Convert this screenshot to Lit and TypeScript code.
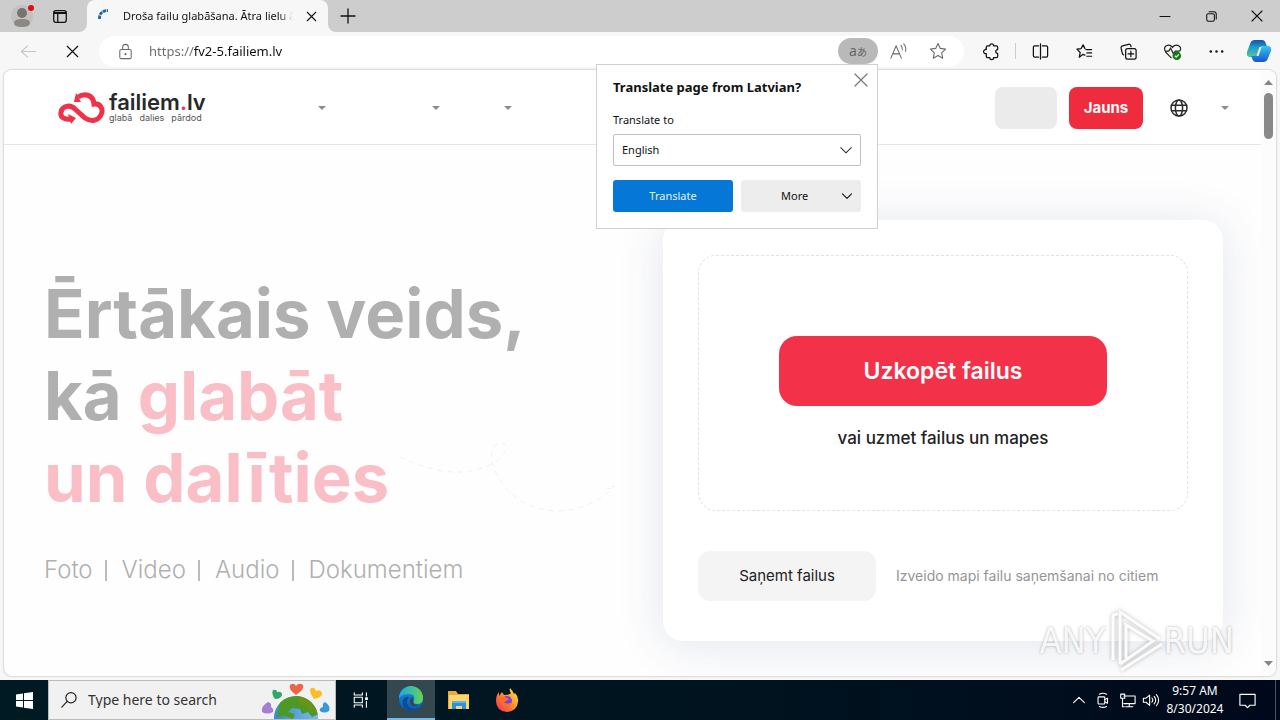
import { LitElement, html, svg, css } from "lit";
import { customElement } from "lit/decorators.js";

const line = (size: number, body: unknown, width = 1.1) => html`<svg width=${size} height=${size} viewBox="0 0 20 20"
  fill="none" stroke="currentColor" stroke-width=${width} stroke-linecap="round" stroke-linejoin="round" aria-hidden="true">${body}</svg>`;

const icons = {
  tabs: svg`<rect x="3" y="4" width="14" height="13" rx="2.5"/><path d="M3.5 7h13M7.5 7v9.500M3.500 6.200h13" />`,
  close: svg`<path d="M5 5l10 10M15 5L5 15"/>`,
  plus: svg`<path d="M10 3v14M3 10h14"/>`,
  minimize: svg`<path d="M5 10.500h10"/>`,
  restore: svg`<rect x="5" y="7" width="8" height="8" rx="1.500"/><path d="M7.500 5h5a2.500 2.500 0 0 1 2.500 2.500v5"/>`,
  back: svg`<path d="M17.500 10H2.500M9 4l-6.500 6L9 16"/>`,
  lock: svg`<rect x="4" y="8" width="12" height="9.500" rx="1.500"/><path d="M7 8V5.500a3 3 0 0 1 6 0V8"/><circle cx="10" cy="12.800" r=".6" fill="currentColor"/>`,
  read: svg`<path d="M2 17L7.500 4L13 17M4 12.500h7M12.500 3.500q2 2 1.500 5M15.500 2q3 3.500 2 8"/>`,
  star: svg`<path d="M10 2.500l2.300 4.900 5.300.7-3.900 3.700 1 5.400-4.700-2.600-4.700 2.600 1-5.400L2.400 8.100l5.300-.7z"/>`,
  puzzle: svg`<path d="M6 4h2.200a2 2 0 0 1 4 0H15a1.500 1.500 0 0 1 1.500 1.500V8a2 2 0 0 0 0 4v3a1.500 1.500 0 0 1-1.500 1.500h-2.800a2 2 0 0 1-4 0H6A1.500 1.500 0 0 1 4.500 15v-2.800a2.200 2.200 0 1 1 0-4.200V5.500A1.500 1.500 0 0 1 6 4z"/>`,
  split: svg`<path d="M8 4H4a1.500 1.500 0 0 0-1.500 1.500v9A1.500 1.500 0 0 0 4 16h4M12 4h4a1.500 1.500 0 0 1 1.500 1.500v9A1.500 1.500 0 0 1 16 16h-4M10 2v16"/>`,
  favorites: svg`<path d="M11.500 8H17.500M12.500 11.500h5M12.500 15h5M10.500 13.800L8.500 13l-4 3 1-5L2 7.500l4.500-.6L8.500 3l2 4"/>`,
  collections: svg`<rect x="7" y="7" width="11" height="11" rx="2"/><path d="M12.500 9.500v6M9.500 12.500h6M5 13.500a2 2 0 0 1-1.500-1.500L2.200 6.500A2 2 0 0 1 3.600 4l6.500-1.600A2 2 0 0 1 12.500 4l.2 1"/>`,
  more: svg`<g fill="currentColor" stroke="none"><circle cx="4" cy="10" r="1.300"/><circle cx="10" cy="10" r="1.300"/><circle cx="16" cy="10" r="1.300"/></g>`,
  chevron: svg`<path d="M3.500 7l6.500 6.500L16.500 7"/>`,
  up: svg`<path d="M4 13l6-6 6 6"/>`,
  globe: svg`<circle cx="10" cy="10" r="8"/><ellipse cx="10" cy="10" rx="3.600" ry="8"/><path d="M2.500 7.300h15M2.500 12.700h15"/>`,
  search: svg`<circle cx="12.200" cy="7.500" r="5.700"/><path d="M8 11.500L2 18"/>`,
  taskview: svg`<path d="M2.500 2v2.500h9V2M2.500 18v-2.500h9V18M2.500 7h9v6h-9zM16 2v3.500M16 11.500V18"/><rect x="15.200" y="7.500" width="1.800" height="2" fill="currentColor"/>`,
  camera: svg`<rect x="4.500" y="6.500" width="7.500" height="8" rx="1"/><path d="M12 9.500l3-1.500v5.500l-3-1.500M6 3.500q4-2 8 0M6 17.200q4 2 8 0"/>`,
  network: svg`<path d="M6.500 5.500H19v8.500H6.500M12.500 14v3.500M8.500 17.500h8M3 3.500h4.500V8H3zM5 8v9.500h2"/>`,
  volume: svg`<path d="M1.500 8v4.500h3l4 3.500V4.500L4.500 8zM11 7.800q2 2.300 0 4.600M13.500 6q3.500 4.200 0 8.400M16 4q5 6.200 0 12.400"/>`,
  note: svg`<path d="M2 3.500h16v11.500h-5.500L10 17.500 7.500 15H2z"/>`,
};

@customElement("app-root")
export class AppRoot extends LitElement {
  static styles = css`
    :host { display: flex; flex-direction: column; height: 100vh; overflow: hidden; background: #f7f7f7; color: #111;
      font: 12px/16px "Noto Sans", "Open Sans", sans-serif; }
    * { box-sizing: border-box; }
    button, input, select { font: inherit; color: inherit; border: 0; padding: 0; margin: 0; background: none; outline: 0; }
    button { display: flex; align-items: center; justify-content: center; }
    svg { display: block; flex: none; }

    .tabstrip { display: flex; height: 32px; flex: none; background: linear-gradient(#cdcdcd 50%, #f7f7f7 50%); }
    .left { display: flex; align-items: center; width: 87px; padding-left: 8px; gap: 10px; background: #cdcdcd; border-bottom-right-radius: 8px; }
    .left button { width: 28px; height: 32px; }
    .tab { display: flex; align-items: center; width: 241px; padding: 0 8px 0 10px; gap: 10px; background: #f7f7f7; border-radius: 8px 8px 0 0; }
    .title { flex: 1; min-width: 0; overflow: hidden; white-space: nowrap; font-size: 11px;
      -webkit-mask-image: linear-gradient(90deg, #000 92%, transparent); mask-image: linear-gradient(90deg, #000 92%, transparent); }
    .rest { flex: 1; display: flex; align-items: center; background: #cdcdcd; border-bottom-left-radius: 8px; padding-left: 10px; }
    .window { display: flex; margin-left: auto; }
    .window button { width: 46px; height: 32px; }

    .toolbar { display: flex; align-items: center; height: 38px; flex: none; padding-left: 14px; }
    .nav { display: flex; gap: 16px; width: 85px; }
    .nav button { width: 28px; height: 28px; }
    .faded { color: #c4c4c4; }
    .address { position: relative; z-index: 5; flex: 1; display: flex; align-items: center; height: 31px; padding: 0 6px 0 17px; gap: 14px; background: #fff; border-radius: 16px; color: #6b6b6b; }
    .url { flex: 1; min-width: 0; height: 24px; font-size: 13px; color: transparent;
      background: linear-gradient(90deg, #6b6b6b 45px, #111 45px); -webkit-background-clip: text; background-clip: text; }
    .actions { display: flex; align-items: center; }
    .actions button { width: 40px; height: 26px; }
    .actions .lang { border-radius: 13px; background: #b9b9b9; font-size: 14px; color: #666; }
    .small { font: 10px "Noto Sans CJK JP", sans-serif; }
    .tools { display: flex; align-items: center; padding-left: 13px; }
    .tools button { width: 44px; height: 32px; }
    .tools button:first-child { width: 28px; }
    .sep { width: 1px; height: 16px; margin-left: 10px; margin-right: 2px; background: #ccc; }
    .tools .copilot { width: 42px; }

    .popup { position: absolute; top: 28px; right: 86px; width: 282px; padding: 13px 16px 16px; background: #fff; border: 1px solid #d0d0d0; color: #111; }
    .popup h2 { margin: 0; font-size: 13px; line-height: 18px; font-weight: 700; }
    .dismiss { position: absolute; top: 6px; right: 7px; width: 18px; height: 18px; color: #777; }
    .popup label { display: block; margin: 16px 0 6px; font-size: 11px; line-height: 16px; }
    .pick { position: relative; display: flex; color: #333; }
    .pick select { flex: 1; height: 32px; padding-left: 8px; border: 1px solid #c2c2c2; border-radius: 2px; appearance: none; color: #111; font-size: 11px; }
    .pick svg { position: absolute; right: 7px; top: 8px; pointer-events: none; }
    .choices { display: grid; grid-template-columns: 1fr 1fr; gap: 8px; margin-top: 14px; }
    .choices button { height: 32px; border-radius: 3px; background: #ededed; font-size: 11px; }
    .choices .go { background: #0578d7; color: #e4f1fc; }
    .choices .menu { padding: 0 7px 0 40px; justify-content: space-between; }

    .frame { flex: 1; min-height: 0; display: flex; margin: 0 4px 4px; background: #fefefe; border-radius: 8px; box-shadow: 0 0 2px #999; overflow: hidden; font-family: "Inter", sans-serif; }
    .page { flex: 1; min-width: 0; display: flex; flex-direction: column; overflow: hidden; }
    .scroll { width: 15px; display: flex; flex-direction: column; align-items: center; justify-content: space-between; padding: 10px 0; background: #fcfcfc; color: #858585; }
    .thumb { width: 9px; height: 46px; border-radius: 5px; background: #898989; margin: 8px 0 auto; }

    .site { display: flex; align-items: center; height: 75px; flex: none; padding: 2px 24px 0 54px; border-bottom: 1px solid #e5e5e5; background: #fff; }
    .logo { display: flex; align-items: center; gap: 4px; width: 190px; color: #292929; text-decoration: none; }
    .brand { font-size: 22px; line-height: 20px; font-weight: 600; }
    .brand i { font-style: normal; color: #f0314a; }
    .words { display: flex; flex-direction: column; }
    .tag { display: flex; gap: 7px; font-size: 9px; line-height: 12px; color: #555; }
    .menus { display: flex; flex: 1; }
    .menus button { justify-content: flex-end; height: 40px; width: 72px; color: #8d8d8d; }
    .menus button:first-child { width: 78px; }
    .menus button:nth-child(2) { width: 114px; }
    .account { display: flex; align-items: center; gap: 12px; }
    .ghost { width: 62px; height: 42px; border-radius: 8px; background: #ebebeb; }
    .account .new { width: 74px; height: 42px; border-radius: 8px; background: #ef2c3e; color: #fff; font-size: 15px; font-weight: 700; }
    .account .locale { gap: 32px; width: 82px; padding-left: 6px; color: #2b2b2b; }
    .locale .caret { color: #8d8d8d; }

    .hero { flex: 1; display: flex; justify-content: space-between; padding: 75px 38px 0 40px; }
    .pitch { position: relative; flex: 1; padding-top: 53px; }
    h1 { margin: 0; font-size: 67px; line-height: 82px; font-weight: 700; color: #b0b0b0; white-space: nowrap; }
    h1 em { font-style: normal; color: #fabec6; }
    .kinds { display: flex; gap: 12px; margin: 36px 0 0; padding: 0; list-style: none; font-size: 24px; line-height: 30px; font-weight: 300; color: #b0b0b0; }
    .kinds li { display: flex; align-items: center; gap: 15px; }
    .kinds li + li::before { content: ""; width: 2px; height: 21px; background: #bcbcbc; }
    .trail { position: absolute; left: 354px; top: 220px; }
    .card { width: 560px; align-self: flex-start; padding: 35px 35px 40px; background: #fff; border-radius: 20px; box-shadow: 0 4px 46px 2px rgba(50, 65, 125, .12); }
    .drop { display: flex; flex-direction: column; align-items: center; gap: 20px; padding: 80px 20px 60px; border: 1px dashed #e3e3e3; border-radius: 18px; font-size: 17px; line-height: 24px; font-weight: 500; color: #222; }
    .upload { width: 328px; height: 70px; border-radius: 18px; background: #f33249; color: #fff; font-size: 23px; font-weight: 600; }
    .receive { display: flex; align-items: center; gap: 20px; margin-top: 40px; color: #959595; font-size: 14px; white-space: nowrap; }
    .receive button { width: 178px; height: 50px; border-radius: 12px; background: #f4f4f4; color: #222; font-size: 15px; }

    .mark { position: absolute; z-index: 4; right: 46px; bottom: 46px; display: flex; align-items: center; color: rgba(255, 255, 255, .9); pointer-events: none;
      font: 36px/64px "DejaVu Sans Condensed", "Open Sans", sans-serif; text-shadow: 0 0 3px rgba(0, 0, 0, .3); }
    .mark svg { filter: drop-shadow(0 0 2px rgba(0, 0, 0, .3)); }

    .taskbar { display: flex; flex: none; height: 40px; background: linear-gradient(90deg, #001a23, #00131f 60%, #00091b); color: #fff; }
    .taskbar button { width: 48px; height: 40px; }
    .find { display: flex; align-items: center; width: 288px; padding: 0 5px 0 11px; gap: 10px; background: #f1f1f1; border: 1px solid #bbb; color: #222; }
    .find input { flex: 1; min-width: 0; font-size: 14px; }
    .find input::placeholder { color: #333; opacity: 1; }
    .taskbar .task { width: 51px; padding-right: 2px; }
    .taskbar .active { background: #33484f; border-bottom: 2px solid #76b9ed; }
    .tray { display: flex; align-items: center; margin-left: auto; }
    .tray button { width: 24px; }
    .clock { width: 64px; text-align: center; line-height: 18px; white-space: nowrap; }
    .tray .notes { width: 40px; }
    .edge { width: 5px; height: 40px; border-left: 1px solid #465465; margin-left: 8px; }
  `;

  private caret() {
    return html`<svg class="caret" width="8" height="4" viewBox="0 0 8 4" fill="currentColor"><path d="M0 0h8L4 4z"/></svg>`;
  }

  private tabStrip() {
    return html`<header class="tabstrip">
      <div class="left">
        <button aria-label="Profile"><svg width="28" height="28" viewBox="0 0 28 28"><circle cx="14" cy="14" r="11" fill="#c3c1bf"/><circle cx="14" cy="11" r="5" fill="#77736f"/><path d="M6 21q0-4 8-4t8 4-8 4-8-4" fill="#8b8783"/><circle cx="23" cy="6" r="3" fill="#e30b16"/></svg></button>
        <button aria-label="Tab actions">${line(18, icons.tabs, 1.4)}</button>
      </div>
      <div class="tab">
        <svg width="16" height="16" viewBox="0 0 16 16" fill="none" stroke="#1c68ad" stroke-width="2.800"><path d="M2.500 11Q2 3 11 2.500" stroke-dasharray="3.500 .7"/></svg>
        <span class="title">Droša failu glabāšana. Ātra lielu ā</span>
        <button aria-label="Close tab">${line(17, icons.close, 1.3)}</button>
      </div>
      <div class="rest">
        <button aria-label="New tab">${line(20, icons.plus, 1.3)}</button>
        <div class="window">
          <button aria-label="Minimize">${line(20, icons.minimize)}</button>
          <button aria-label="Restore">${line(19, icons.restore)}</button>
          <button aria-label="Close">${line(20, icons.close)}</button>
        </div>
      </div>
    </header>`;
  }

  private popup() {
    return html`<section class="popup">
      <h2>Translate page from Latvian?</h2>
      <button class="dismiss" aria-label="Dismiss">${line(24, icons.close, 1)}</button>
      <label for="language">Translate to</label>
      <div class="pick"><select id="language"><option>English</option></select>${line(16, icons.chevron, 1.3)}</div>
      <div class="choices"><button class="go">Translate</button><button class="menu">More ${line(14, icons.chevron, 1.5)}</button></div>
    </section>`;
  }

  private toolbar() {
    return html`<div class="toolbar">
      <div class="nav">
        <button class="faded" aria-label="Back">${line(19, icons.back)}</button>
        <button aria-label="Stop">${line(21, icons.close)}</button>
      </div>
      <div class="address">
        ${line(19, icons.lock)}
        <input class="url" aria-label="Address" value="https://fv2-5.failiem.lv">
        <div class="actions">
          <button class="lang" aria-label="Translate">a<span class="small">あ</span></button>
          <button aria-label="Read aloud">${line(19, icons.read)}</button>
          <button aria-label="Favorite">${line(20, icons.star)}</button>
        </div>
        ${this.popup()}
      </div>
      <div class="tools">
        <button aria-label="Extensions">${line(19, icons.puzzle, 1.3)}</button><span class="sep"></span>
        <button aria-label="Split screen">${line(19, icons.split, 1.3)}</button>
        <button aria-label="Favorites">${line(19, icons.favorites, 1.3)}</button>
        <button aria-label="Collections">${line(19, icons.collections, 1.3)}</button>
        <button aria-label="Browser essentials"><svg width="19" height="19" viewBox="0 0 20 20" fill="none" stroke="#222" stroke-width="1.300"><path d="M9 17L3 11Q0 6 3.500 4 7 2 10 5.500 13 2 16.500 4 20 6 17.500 10M2 9.500h4l2-3 3 6 2-3h4"/><circle cx="14.500" cy="14.500" r="4.500" fill="#107c10" stroke="none"/><path d="M12.500 14.500l1.400 1.500 2.700-3" stroke="#fff"/></svg></button>
        <button aria-label="More tools">${line(19, icons.more)}</button>
        <button class="copilot" aria-label="Copilot"><svg width="26" height="26" viewBox="0 0 26 26">
          <defs><linearGradient id="ca" x2="0" y2="1"><stop stop-color="#1453a4"/><stop offset=".45" stop-color="#1d9fd0"/><stop offset="1" stop-color="#55c992"/></linearGradient>
          <linearGradient id="cb" x2="0" y2="1"><stop stop-color="#38c6f1"/><stop offset="1" stop-color="#1555d4"/></linearGradient></defs>
          <path d="M9 2h7q3 0 4 4l1 2h-3q-4 0-5 4l-1 4q-1 3-4 3H4q-4 0-3-5L4 6q1-4 5-4z" fill="url(#ca)"/>
          <path d="M18 8h4q4 0 3 5l-3 7q-1 4-5 4h-7q-3 0-4-4l-1-2h3q4 0 5-4l1-3q1-3 4-3z" fill="url(#cb)"/><path d="M13.500 9h2l-3 9h-2z" fill="#f7f7f7"/></svg></button>
      </div>
    </div>`;
  }

  private site() {
    return html`<header class="site">
      <a class="logo" href="#">
        <svg width="47" height="32" viewBox="0 0 47 32" fill="none" stroke="#f0314a" stroke-width="5"><path d="M20 5C26 1 35 2 36 12C42 11 46 17 43 23C40 29 33 30 27 26L17 17C12 12 4 14 3 20C2 25 6 28 13 27"/><path d="M18 1l5 9-7 0zM10 22l8 4-5 6z" fill="#f0314a" stroke="none"/></svg>
        <span class="words"><span class="brand">failiem<i>.</i>lv</span><span class="tag"><span>glabā</span> <span>dalies</span> <span>pārdod</span></span></span>
      </a>
      <nav class="menus">
        <button aria-label="Menu">${this.caret()}</button><button aria-label="Menu">${this.caret()}</button><button aria-label="Menu">${this.caret()}</button>
      </nav>
      <div class="account">
        <button class="ghost" aria-label="Sign in"></button>
        <button class="new">Jauns</button>
        <button class="locale" aria-label="Language">${line(20, icons.globe, 1.5)}${this.caret()}</button>
      </div>
    </header>`;
  }

  private hero() {
    return html`<main class="hero">
      <section class="pitch">
        <h1>Ērtākais veids,<br>kā <em>glabāt<br>un dalīties</em></h1>
        <ul class="kinds"><li>Foto</li><li>Video</li><li>Audio</li><li>Dokumentiem</li></ul>
        <svg class="trail" width="220" height="74" viewBox="0 0 220 74" fill="none" stroke="#f0f0f0" stroke-dasharray="5 5"><path d="M2 17Q60 45 99 21C113 10 110 2 102 3C90 5 92 24 100 37C126 82 185 78 214 49l-6-1 8-2 1 6"/></svg>
      </section>
      <section class="card">
        <div class="drop"><button class="upload">Uzkopēt failus</button><span>vai uzmet failus un mapes</span></div>
        <div class="receive"><button>Saņemt failus</button><span>Izveido mapi failu saņemšanai no citiem</span></div>
      </section>
    </main>`;
  }

  private taskbar() {
    return html`<footer class="taskbar">
      <button aria-label="Start"><svg width="17" height="17" viewBox="0 0 17 17" fill="#fff"><path d="M0 2.500l7-1V8H0zM8 1.300L17 0v8H8zM0 9h7v6.500l-7-1zM8 9h9v8l-9-1.300z"/></svg></button>
      <label class="find">${line(18, icons.search, 1.3)}
        <input aria-label="Search" placeholder="Type here to search">
        <svg width="74" height="38" viewBox="0 0 74 38">
          <defs><clipPath id="world"><circle cx="40" cy="37" r="22"/></clipPath><linearGradient id="sea" x2="1"><stop stop-color="#338fc9"/><stop offset="1" stop-color="#77baf0"/></linearGradient></defs>
          <circle cx="40" cy="37" r="22" fill="url(#sea)"/>
          <g clip-path="url(#world)"><path d="M24 20q10-6 22-5 12 4 17 18l-7 3-4-5-6 2-2-5-8-1-4 4 7 2-2 5-8-3-8 1z" fill="#4c9a25"/><path d="M42 15q14 3 18 16l-7-1-3-5-7-2z" fill="#6a9415"/></g>
          <path d="M34 4q4-3 6 1 3-4 7-1 2 4-7 10-8-6-6-10" fill="#ee6449"/>
          <path d="M17 9q4-1 4 2 5-1 5 3-1 4-7 4-4-5-2-9" fill="#2fa866"/>
          <path d="M55 7q4-1 5 3 5-2 6 2 1 4-8 6-6-8-3-11" fill="#f9bd27"/>
          <path d="M12 21q4 1 3 5 3 2 2 5-6 3-11 0-1-6 6-10" fill="#a77dd6"/>
          <path d="M69 21q-3 1-2 5-4 1-3 4 4 3 9 0 2-5-4-9" fill="#3498db"/>
        </svg>
      </label>
      <button class="task" aria-label="Task view">${line(18, icons.taskview, 1.2)}</button>
      <button class="active" aria-label="Edge"><svg width="26" height="26" viewBox="0 0 26 26">
        <defs><linearGradient id="ea" x2="1"><stop stop-color="#1aa8e8"/><stop offset="1" stop-color="#65d454"/></linearGradient><linearGradient id="eb" x2="0" y2="1"><stop stop-color="#1793df"/><stop offset="1" stop-color="#0c57b0"/></linearGradient></defs>
        <circle cx="13" cy="13" r="12" fill="url(#eb)"/><path d="M1 12A12 12 0 0 1 25 12q0 6-6 6-5 0-3-3 2-7-5-7-7 0-10 4z" fill="url(#ea)"/><path d="M11 11q-5 7 2 11 4 2 9-1-4 4-9 4Q3 23 5 14q2-4 6-3z" fill="#0b4c98"/><path d="M14 11q2 2 1 5 1 3 5 3-5 3-8-1-1-5 2-7z" fill="#33484f"/></svg></button>
      <button aria-label="File Explorer"><svg width="22" height="20" viewBox="0 0 22 20"><path d="M0 1h8l2 3h11v15H0z" fill="#e9ab35"/><path d="M1 5h20v14H1z" fill="#fcd66d"/><path d="M4 19v-8h14v8h-4v-3H8v3z" fill="#2f91d8"/><path d="M4 11h14v2H4z" fill="#56b8ef"/></svg></button>
      <button aria-label="Firefox"><svg width="24" height="24" viewBox="0 0 24 24"><defs><linearGradient id="ff" x1="1" x2="0" y2="1"><stop stop-color="#fff04a"/><stop offset=".45" stop-color="#ff9526"/><stop offset="1" stop-color="#f0245f"/></linearGradient></defs><path d="M15 0q3 3 4 6l1-1q4 4 3 9-1 9-11 10Q1 23 1 13q0-6 3-9v4l3-4 2 3q6 0 7-2-2-2-1-5z" fill="url(#ff)"/><circle cx="12" cy="13" r="5" fill="#7946d3"/><path d="M5 10q4-3 7 0l2 1q-2 2-5 3 3 3 8 0-2 6-7 5-5-2-5-9z" fill="#ff6b2c"/></svg></button>
      <div class="tray">
        <button aria-label="Hidden icons">${line(18, icons.up, 1.2)}</button>
        <button aria-label="Meet now">${line(18, icons.camera, 1.2)}</button>
        <button aria-label="Network">${line(18, icons.network, 1.2)}</button>
        <button aria-label="Volume">${line(18, icons.volume, 1.2)}</button>
        <time class="clock">9:57 AM<br>8/30/2024</time>
        <button class="notes" aria-label="Notifications">${line(19, icons.note, 1.2)}</button>
        <span class="edge"></span>
      </div>
    </footer>`;
  }

  render() {
    return html`${this.tabStrip()}${this.toolbar()}
      <div class="frame">
        <div class="page">${this.site()}${this.hero()}</div>
        <div class="scroll">
          <svg width="9" height="5" viewBox="0 0 9 5" fill="currentColor"><path d="M0 5L4.500 0 9 5z"/></svg>
          <span class="thumb"></span>
          <svg width="9" height="5" viewBox="0 0 9 5" fill="currentColor"><path d="M0 0h9L4.500 5z"/></svg>
        </div>
      </div>
      ${this.taskbar()}
      <div class="mark"><span>ANY</span>
        <svg width="58" height="66" viewBox="0 0 58 66" fill="none" stroke="rgba(255,255,255,.9)" stroke-width="3"><path d="M7 52V9q0-3 5-3M14 56V4L54 31M20 50V17l27 16L14 56M15 62L56 36"/></svg>
        <span>RUN</span></div>`;
  }
}
